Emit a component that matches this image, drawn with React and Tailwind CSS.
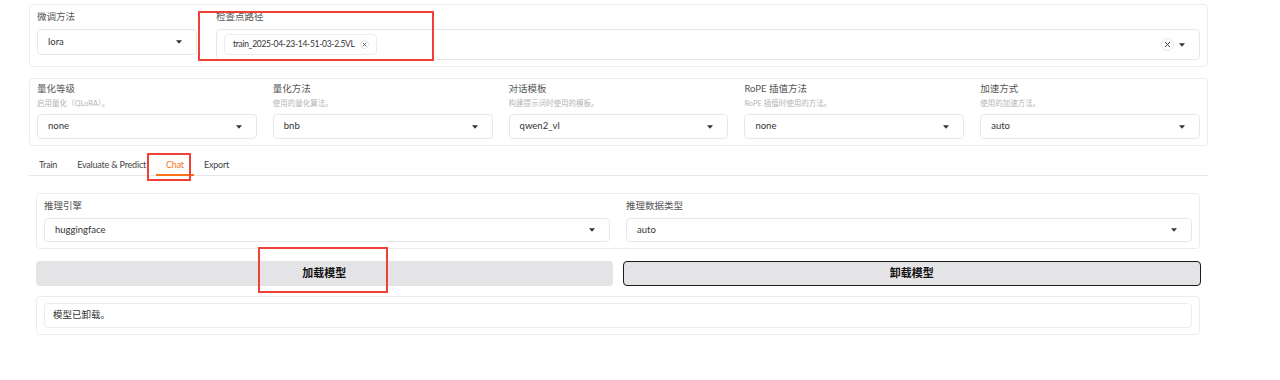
import React from 'react';

const font = { fontFamily: 'Lato, "Noto Sans CJK SC", sans-serif' };

function Caret() {
  return (
    <svg width="6" height="4" viewBox="0 0 6 4" className="shrink-0">
      <path d="M0 0.2 L6 0.2 L3 3.8 Z" fill="#333" />
    </svg>
  );
}

function Select({ value, className = '' }) {
  return (
    <div className={`flex items-center justify-between bg-white border border-[#e8e8ea] rounded-[4px] pl-[10px] pr-[14px] ${className}`}>
      <span className="text-[9.5px] text-[#333]">{value}</span>
      <Caret />
    </div>
  );
}

function Field({ label, desc, value }) {
  return (
    <div className="flex flex-col">
      <div className="text-[9.5px] text-[#555] leading-[12px]">{label}</div>
      <div className="text-[7.5px] text-[#b5b5b5] leading-[10px] mt-[4px]">{desc}</div>
      <Select value={value} className="h-[25px] mt-[5px]" />
    </div>
  );
}

export default function App() {
  const tabs = ['Train', 'Evaluate & Predict', 'Chat', 'Export'];
  return (
    <div className="relative w-[1280px] h-[380px] bg-white overflow-hidden" style={font}>
      <div className="w-[1179px] ml-[29px] pt-[4px]">
        {/* top panel */}
        <div className="h-[63px] border border-[#ececee] rounded-[4px] flex px-[7px] pt-[6px] gap-[19px]">
          <div className="w-[160px] flex flex-col">
            <div className="text-[9.5px] text-[#555] leading-[12px]">微调方法</div>
            <Select value="lora" className="h-[26px] mt-[6px]" />
          </div>
          <div className="flex-1 flex flex-col">
            <div className="text-[9.5px] text-[#555] leading-[12px]">检查点路径</div>
            <div className="h-[31px] mt-[6px] border border-[#e8e8ea] rounded-[4px] flex items-center pl-[7px] pr-[14px]">
              <div className="h-[21px] flex items-center gap-[5px] border border-[#ececee] rounded-[4px] pl-[8px] pr-[7px]">
                <span className="text-[8.5px] tracking-[-0.3px] text-[#333]">train_2025-04-23-14-51-03-2.5VL</span>
                <span className="w-[9px] h-[9px] rounded-full border border-[#e4e4e4] flex items-center justify-center">
                  <svg width="5" height="5" viewBox="0 0 5 5"><path d="M0.8 0.8 L4.2 4.2 M4.2 0.8 L0.8 4.2" stroke="#555" strokeWidth="0.9" /></svg>
                </span>
              </div>
              <div className="flex-1" />
              <span className="w-[13px] h-[13px] rounded-full border border-[#e8e8e8] flex items-center justify-center mr-[5px]">
                <svg width="7" height="7" viewBox="0 0 7 7"><path d="M1 1 L6 6 M6 1 L1 6" stroke="#444" strokeWidth="1" /></svg>
              </span>
              <Caret />
            </div>
          </div>
        </div>

        {/* second panel */}
        <div className="mt-[11px] h-[68px] border border-[#ececee] rounded-[4px] grid grid-cols-5 gap-[16px] px-[7px] pt-[4px]">
          <Field label="量化等级" desc="启用量化（QLoRA）。" value="none" />
          <Field label="量化方法" desc="使用的量化算法。" value="bnb" />
          <Field label="对话模板" desc="构建提示词时使用的模板。" value="qwen2_vl" />
          <Field label="RoPE 插值方法" desc="RoPE 插值时使用的方法。" value="none" />
          <Field label="加速方式" desc="使用的加速方法。" value="auto" />
        </div>

        {/* tabs */}
        <div className="mt-[9px] flex border-b border-[#e8e8ea] h-[21px]">
          {tabs.map((t) => (
            <div
              key={t}
              className={`px-[10px] flex items-center text-[9px] tracking-[-0.2px] ${t === 'Chat' ? 'text-[#f97316] border-b-2 border-[#f97316] -mb-px' : 'text-[#444]'}`}
            >
              {t}
            </div>
          ))}
        </div>

        {/* tab content */}
        <div className="pl-[7px] pr-[8px] pt-[17px]">
          <div className="h-[56px] border border-[#ececee] rounded-[4px] grid grid-cols-2 gap-[16px] px-[7px] pt-[6px]">
            <div className="flex flex-col">
              <div className="text-[9.5px] text-[#555] leading-[12px]">推理引擎</div>
              <Select value="huggingface" className="h-[24px] mt-[6px]" />
            </div>
            <div className="flex flex-col">
              <div className="text-[9.5px] text-[#555] leading-[12px]">推理数据类型</div>
              <Select value="auto" className="h-[24px] mt-[6px]" />
            </div>
          </div>

          <div className="mt-[12px] flex gap-[10px]">
            <button className="flex-1 h-[25px] bg-[#e4e4e7] rounded-[4px] text-[11px] font-bold text-[#111]">加载模型</button>
            <button className="flex-1 h-[25px] bg-[#e4e4e7] rounded-[4px] border-[1.5px] border-[#1a1a1a] text-[11px] font-bold text-[#111] -mr-px">卸载模型</button>
          </div>

          <div className="mt-[10px] h-[39px] border border-[#ececee] rounded-[4px] px-[7px] pt-[6px]">
            <div className="h-[25px] border border-[#ececee] rounded-[4px] flex items-center pl-[8px] text-[9.5px] text-[#333]">模型已卸载。</div>
          </div>
        </div>
      </div>

      {/* red annotation boxes */}
      <div className="absolute left-[198px] top-[11px] w-[236px] h-[50px] border-2 border-[#ef4136]" />
      <div className="absolute left-[147px] top-[153px] w-[44px] h-[28px] border-2 border-[#ef4136]" />
      <div className="absolute left-[258px] top-[247px] w-[130px] h-[46px] border-2 border-[#ef4136]" />
    </div>
  );
}
